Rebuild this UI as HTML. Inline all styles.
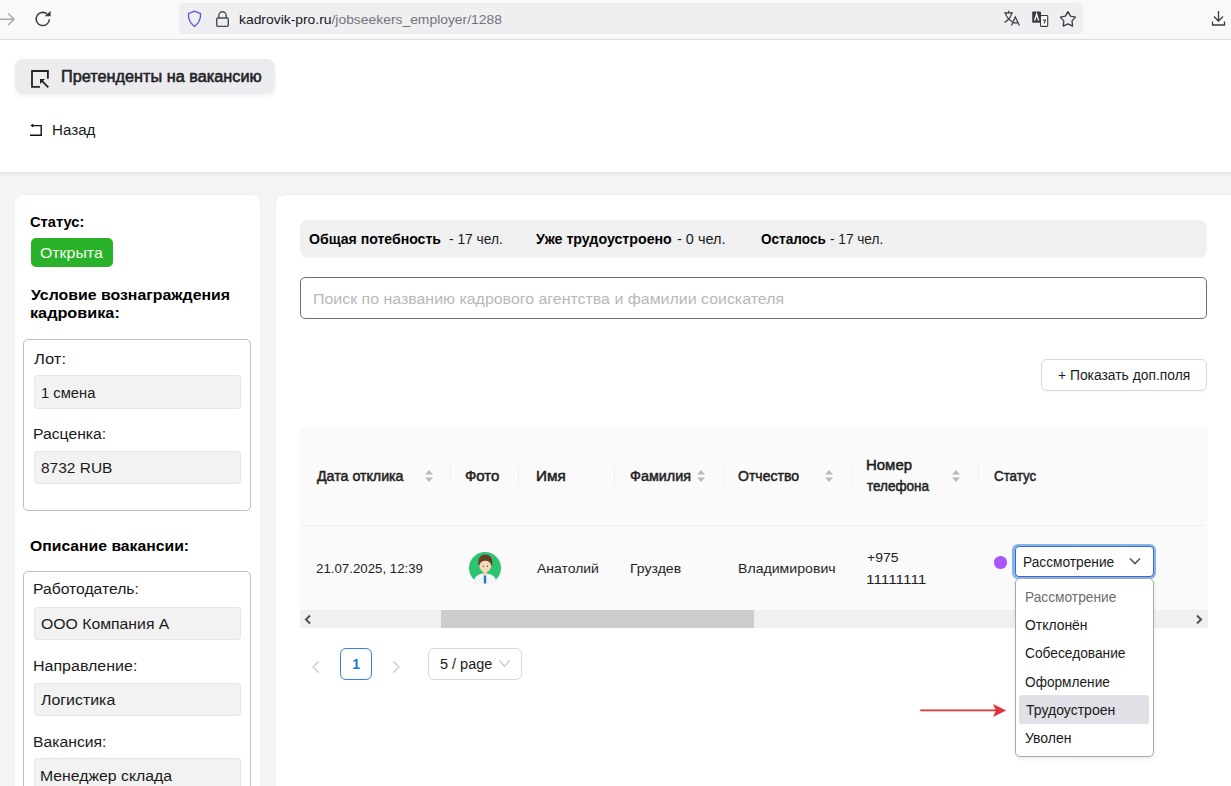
<!DOCTYPE html>
<html><head><meta charset="utf-8"><style>
html,body{margin:0;padding:0;}
body{width:1231px;height:786px;overflow:hidden;position:relative;font-family:"Liberation Sans", sans-serif;background:#fff;}
</style></head><body>
<div style="position:absolute;left:0px;top:0px;width:1231px;height:39px;background:#f9f9fb;"></div>
<div style="position:absolute;left:0px;top:39px;width:1231px;height:1px;background:#e2e2e7;"></div>
<svg style="position:absolute;left:0;top:10px" width="16" height="20" viewBox="0 0 16 20"><path d="M-2 9.3 H14 M8.2 3.5 L14 9.3 L8.2 15.1" fill="none" stroke="#a9a9ad" stroke-width="1.4"/></svg>
<svg style="position:absolute;left:35px;top:10px" width="18" height="18" viewBox="0 0 18 18"><path d="M14.4 9.2 A6.6 6.6 0 1 1 12.0 3.9" fill="none" stroke="#3a3a40" stroke-width="1.5"/><path d="M9.6 6.2 L15.6 6.2 L15.6 1.0 Z" fill="#3a3a40"/></svg>
<div style="position:absolute;left:179px;top:3px;width:904px;height:31px;background:#efeff2;border-radius:4px;"></div>
<svg style="position:absolute;left:186px;top:10px" width="17" height="18" viewBox="0 0 17 18"><path d="M8.5 1.2 L14.6 3.6 C14.8 9 12.6 13.6 8.5 16.6 C4.4 13.6 2.2 9 2.4 3.6 Z" fill="none" stroke="#5b5bd6" stroke-width="1.3" stroke-linejoin="round"/></svg>
<svg style="position:absolute;left:215px;top:10px" width="15" height="18" viewBox="0 0 15 18"><path d="M3.8 8 V5.5 A3.7 3.7 0 0 1 11.2 5.5 V8" fill="none" stroke="#4a4a50" stroke-width="1.4"/><rect x="1.7" y="8" width="11.6" height="8.4" rx="1.5" fill="none" stroke="#4a4a50" stroke-width="1.4"/></svg>
<div style="position:absolute;left:239.30px;top:13.49px;font-size:13.6px;line-height:13.6px;font-weight:400;color:#15141a;white-space:nowrap;transform:scaleX(1.0204);transform-origin:0 0;">kadrovik-pro.ru<span style="color:#737379">/jobseekers_employer/1288</span></div>
<svg style="position:absolute;left:1003px;top:10px" width="19" height="18" viewBox="0 0 19 18"><path d="M1.2 2.8 H10 M5.6 0.8 V2.8 M2.6 3.4 C3.6 7.4 6 10 9.4 11.6 M8.6 3.4 C7.9 7 5.5 10.2 1.5 12.4" fill="none" stroke="#3a3a40" stroke-width="1.2"/><path d="M8.4 15.6 L12.3 7 L16.4 15.6 M9.7 12.9 H15.1" fill="none" stroke="#3a3a40" stroke-width="1.2"/></svg>
<svg style="position:absolute;left:1031px;top:10px" width="19" height="18" viewBox="0 0 19 18"><rect x="9.5" y="5.5" width="7.2" height="10.9" rx="0.8" fill="#fff" stroke="#3a3a40" stroke-width="1.1"/><rect x="1.2" y="1.4" width="8.8" height="11.3" rx="0.8" fill="#3a3a40"/><path d="M3.6 10.5 L5.6 4 L7.6 10.5" fill="none" stroke="#fff" stroke-width="1.3"/><path d="M11.5 10 H14.5 L13 13.5" fill="none" stroke="#3a3a40" stroke-width="1.1"/></svg>
<svg style="position:absolute;left:1059px;top:10px" width="18" height="18" viewBox="0 0 18 18"><path d="M8.90 1.60 L11.43 6.12 L16.51 7.13 L12.99 10.93 L13.60 16.07 L8.90 13.90 L4.20 16.07 L4.81 10.93 L1.29 7.13 L6.37 6.12 Z" fill="none" stroke="#3a3a40" stroke-width="1.3" stroke-linejoin="round"/></svg>
<svg style="position:absolute;left:1211px;top:10px" width="16" height="17" viewBox="0 0 16 17"><path d="M7.5 1 V11 M3 6.5 L7.5 11 L12 6.5 M1.5 11.5 V15 H13.5 V11.5" fill="none" stroke="#3a3a40" stroke-width="1.3"/></svg>
<div style="position:absolute;left:0px;top:40px;width:1231px;height:746px;background:#f3f4f6;"></div>
<div style="position:absolute;left:0px;top:40px;width:1231px;height:132px;background:#fff;box-shadow:0 1px 4px rgba(0,0,0,0.10);"></div>
<div style="position:absolute;left:15px;top:59px;width:260px;height:35px;background:#ececee;border-radius:8px;box-shadow:0 2px 5px rgba(0,0,0,0.06);"></div>
<svg style="position:absolute;left:30px;top:69px" width="20" height="20" viewBox="0 0 20 20"><path d="M9.9 17.9 H2 V2 H17.9 V9.7" fill="none" stroke="#222" stroke-width="1.8"/><path d="M11.6 11.6 L18.3 18.3" stroke="#222" stroke-width="1.8"/><path d="M10 10 L15 10 L10 15 Z" fill="#222"/></svg>
<div style="position:absolute;left:60.80px;top:68.59px;font-size:15.6px;line-height:15.6px;font-weight:400;color:#1f2329;white-space:nowrap;transform:scaleX(1.0434);transform-origin:0 0;-webkit-text-stroke:0.55px #1f2329;">Претенденты на вакансию</div>
<svg style="position:absolute;left:28px;top:122px" width="16" height="16" viewBox="0 0 16 16"><path d="M4 3.6 H13.2 V13.2 H2" fill="none" stroke="#111" stroke-width="1.4"/><path d="M2.4 3.6 L5.2 1.6 L5.2 5.6 Z" fill="#111"/></svg>
<div style="position:absolute;left:51.69px;top:123.26px;font-size:14.7px;line-height:14.7px;font-weight:400;color:#1a1a1a;white-space:nowrap;transform:scaleX(1.0315);transform-origin:0 0;">Назад</div>
<div style="position:absolute;left:15px;top:195px;width:245px;height:600px;background:#fff;border-radius:9px;box-shadow:0 0 3px rgba(0,0,0,0.03);"></div>
<div style="position:absolute;left:30.41px;top:214.53px;font-size:14.5px;line-height:14.5px;font-weight:700;color:#000;white-space:nowrap;transform:scaleX(1.0123);transform-origin:0 0;">Статус:</div>
<div style="position:absolute;left:31px;top:238px;width:82px;height:29px;background:#2bb22b;border-radius:5px;"></div>
<div style="position:absolute;left:39.79px;top:246.47px;font-size:14.8px;line-height:14.8px;font-weight:400;color:#f4fff0;white-space:nowrap;transform:scaleX(1.0731);transform-origin:0 0;">Открыта</div>
<div style="position:absolute;left:31.05px;top:287.10px;font-size:15px;line-height:15px;font-weight:700;color:#000;white-space:nowrap;transform:scaleX(1.0570);transform-origin:0 0;">Условие вознаграждения</div>
<div style="position:absolute;left:29.99px;top:304.90px;font-size:15px;line-height:15px;font-weight:700;color:#000;white-space:nowrap;transform:scaleX(1.0822);transform-origin:0 0;">кадровика:</div>
<div style="position:absolute;left:23px;top:338.5px;width:228px;height:172px;border:1px solid #bdbdbd;border-radius:5px;box-sizing:border-box;"></div>
<div style="position:absolute;left:33.52px;top:350.93px;font-size:15.2px;line-height:15.2px;font-weight:400;color:#1a1a1a;white-space:nowrap;transform:scaleX(1.0935);transform-origin:0 0;">Лот:</div>
<div style="position:absolute;left:34px;top:375px;width:207px;height:33.5px;background:#f2f2f2;border:1px solid #e6e6e6;border-radius:3px;box-sizing:border-box;"></div>
<div style="position:absolute;left:40.69px;top:384.73px;font-size:15.2px;line-height:15.2px;font-weight:400;color:#1a1a1a;white-space:nowrap;transform:scaleX(0.9718);transform-origin:0 0;">1 смена</div>
<div style="position:absolute;left:32.94px;top:426.33px;font-size:15.2px;line-height:15.2px;font-weight:400;color:#1a1a1a;white-space:nowrap;transform:scaleX(1.0356);transform-origin:0 0;">Расценка:</div>
<div style="position:absolute;left:34px;top:451px;width:207px;height:32.5px;background:#f2f2f2;border:1px solid #e6e6e6;border-radius:3px;box-sizing:border-box;"></div>
<div style="position:absolute;left:41.18px;top:459.73px;font-size:15.2px;line-height:15.2px;font-weight:400;color:#1a1a1a;white-space:nowrap;transform:scaleX(1.0189);transform-origin:0 0;">8732 RUB</div>
<div style="position:absolute;left:30.27px;top:537.50px;font-size:15px;line-height:15px;font-weight:700;color:#000;white-space:nowrap;transform:scaleX(1.0488);transform-origin:0 0;">Описание вакансии:</div>
<div style="position:absolute;left:23px;top:570.5px;width:228px;height:240px;border:1px solid #bdbdbd;border-radius:5px;box-sizing:border-box;"></div>
<div style="position:absolute;left:32.84px;top:581.33px;font-size:15.2px;line-height:15.2px;font-weight:400;color:#1a1a1a;white-space:nowrap;transform:scaleX(1.0328);transform-origin:0 0;">Работодатель:</div>
<div style="position:absolute;left:34px;top:607px;width:207px;height:33px;background:#f2f2f2;border:1px solid #e6e6e6;border-radius:3px;box-sizing:border-box;"></div>
<div style="position:absolute;left:40.59px;top:616.43px;font-size:15.2px;line-height:15.2px;font-weight:400;color:#1a1a1a;white-space:nowrap;transform:scaleX(1.0391);transform-origin:0 0;">ООО Компания А</div>
<div style="position:absolute;left:32.72px;top:657.83px;font-size:15.2px;line-height:15.2px;font-weight:400;color:#1a1a1a;white-space:nowrap;transform:scaleX(1.0528);transform-origin:0 0;">Направление:</div>
<div style="position:absolute;left:34px;top:683px;width:207px;height:33px;background:#f2f2f2;border:1px solid #e6e6e6;border-radius:3px;box-sizing:border-box;"></div>
<div style="position:absolute;left:41.22px;top:692.33px;font-size:15.2px;line-height:15.2px;font-weight:400;color:#1a1a1a;white-space:nowrap;transform:scaleX(1.0478);transform-origin:0 0;">Логистика</div>
<div style="position:absolute;left:32.74px;top:733.73px;font-size:15.2px;line-height:15.2px;font-weight:400;color:#1a1a1a;white-space:nowrap;transform:scaleX(1.0351);transform-origin:0 0;">Вакансия:</div>
<div style="position:absolute;left:34px;top:758px;width:207px;height:33px;background:#f2f2f2;border:1px solid #e6e6e6;border-radius:3px;box-sizing:border-box;"></div>
<div style="position:absolute;left:40.04px;top:767.93px;font-size:15.2px;line-height:15.2px;font-weight:400;color:#1a1a1a;white-space:nowrap;transform:scaleX(1.0401);transform-origin:0 0;">Менеджер склада</div>
<div style="position:absolute;left:276px;top:195px;width:970px;height:600px;background:#fff;border-radius:9px;box-shadow:0 0 3px rgba(0,0,0,0.03);"></div>
<div style="position:absolute;left:300px;top:220px;width:907px;height:36.5px;background:#f0f0f0;border-radius:8px;box-shadow:0 1px 2px rgba(0,0,0,0.04);"></div>
<div style="position:absolute;left:309.24px;top:232.15px;font-size:14px;line-height:14px;font-weight:700;color:#000;white-space:nowrap;transform:scaleX(1.0057);transform-origin:0 0;">Общая потебность</div>
<div style="position:absolute;left:448.95px;top:232.15px;font-size:14px;line-height:14px;font-weight:400;color:#1a1a1a;white-space:nowrap;transform:scaleX(0.9826);transform-origin:0 0;">- 17 чел.</div>
<div style="position:absolute;left:536.00px;top:232.15px;font-size:14px;line-height:14px;font-weight:700;color:#000;white-space:nowrap;transform:scaleX(1.0146);transform-origin:0 0;">Уже трудоустроено</div>
<div style="position:absolute;left:676.82px;top:232.15px;font-size:14px;line-height:14px;font-weight:400;color:#1a1a1a;white-space:nowrap;transform:scaleX(1.0337);transform-origin:0 0;">- 0 чел.</div>
<div style="position:absolute;left:760.96px;top:232.15px;font-size:14px;line-height:14px;font-weight:700;color:#000;white-space:nowrap;transform:scaleX(0.9701);transform-origin:0 0;">Осталось</div>
<div style="position:absolute;left:829.96px;top:232.15px;font-size:14px;line-height:14px;font-weight:400;color:#1a1a1a;white-space:nowrap;transform:scaleX(0.9732);transform-origin:0 0;">- 17 чел.</div>
<div style="position:absolute;left:300px;top:277px;width:907px;height:41.5px;border:1px solid #6e6e6e;border-radius:5px;box-sizing:border-box;"></div>
<div style="position:absolute;left:312.53px;top:290.96px;font-size:15.4px;line-height:15.4px;font-weight:400;color:#b8b8b8;white-space:nowrap;transform:scaleX(1.0347);transform-origin:0 0;">Поиск по названию кадрового агентства и фамилии соискателя</div>
<div style="position:absolute;left:1041px;top:359px;width:165.5px;height:31.5px;border:1px solid #d9d9d9;border-radius:6px;box-sizing:border-box;box-shadow:0 2px 0 rgba(0,0,0,0.02);"></div>
<div style="position:absolute;left:1058.38px;top:368.25px;font-size:14px;line-height:14px;font-weight:400;color:#1a1a1a;white-space:nowrap;transform:scaleX(0.9890);transform-origin:0 0;">+ Показать доп.поля</div>
<div style="position:absolute;left:300px;top:428px;width:907.5px;height:97px;background:#fafafa;"></div>
<div style="position:absolute;left:300px;top:525px;width:905.5px;height:1px;background:#f0f0f0;"></div>
<div style="position:absolute;left:300px;top:526px;width:907.5px;height:84.5px;background:#fafafa;"></div>
<div style="position:absolute;left:450px;top:466px;width:1px;height:18px;background:#efefef;"></div>
<div style="position:absolute;left:517.5px;top:466px;width:1px;height:18px;background:#efefef;"></div>
<div style="position:absolute;left:614px;top:466px;width:1px;height:18px;background:#efefef;"></div>
<div style="position:absolute;left:722.5px;top:466px;width:1px;height:18px;background:#efefef;"></div>
<div style="position:absolute;left:851px;top:466px;width:1px;height:18px;background:#efefef;"></div>
<div style="position:absolute;left:977.5px;top:466px;width:1px;height:18px;background:#efefef;"></div>
<div style="position:absolute;left:316.63px;top:469.52px;font-size:13.8px;line-height:13.8px;font-weight:400;color:#1f1f1f;white-space:nowrap;transform:scaleX(1.0292);transform-origin:0 0;-webkit-text-stroke:0.5px #1f1f1f;">Дата отклика</div>
<div style="position:absolute;left:465.48px;top:469.52px;font-size:13.8px;line-height:13.8px;font-weight:400;color:#1f1f1f;white-space:nowrap;transform:scaleX(1.0837);transform-origin:0 0;-webkit-text-stroke:0.5px #1f1f1f;">Фото</div>
<div style="position:absolute;left:535.58px;top:469.52px;font-size:13.8px;line-height:13.8px;font-weight:400;color:#1f1f1f;white-space:nowrap;transform:scaleX(1.1071);transform-origin:0 0;-webkit-text-stroke:0.5px #1f1f1f;">Имя</div>
<div style="position:absolute;left:629.81px;top:469.52px;font-size:13.8px;line-height:13.8px;font-weight:400;color:#1f1f1f;white-space:nowrap;transform:scaleX(1.0400);transform-origin:0 0;-webkit-text-stroke:0.5px #1f1f1f;">Фамилия</div>
<div style="position:absolute;left:738.47px;top:469.52px;font-size:13.8px;line-height:13.8px;font-weight:400;color:#1f1f1f;white-space:nowrap;transform:scaleX(1.0172);transform-origin:0 0;-webkit-text-stroke:0.5px #1f1f1f;">Отчество</div>
<div style="position:absolute;left:865.90px;top:459.22px;font-size:13.8px;line-height:13.8px;font-weight:400;color:#1f1f1f;white-space:nowrap;transform:scaleX(1.0839);transform-origin:0 0;-webkit-text-stroke:0.5px #1f1f1f;">Номер</div>
<div style="position:absolute;left:866.80px;top:480.32px;font-size:13.8px;line-height:13.8px;font-weight:400;color:#1f1f1f;white-space:nowrap;transform:scaleX(0.9767);transform-origin:0 0;-webkit-text-stroke:0.5px #1f1f1f;">телефона</div>
<div style="position:absolute;left:993.63px;top:469.72px;font-size:13.8px;line-height:13.8px;font-weight:400;color:#1f1f1f;white-space:nowrap;transform:scaleX(0.9677);transform-origin:0 0;-webkit-text-stroke:0.5px #1f1f1f;">Статус</div>
<svg style="position:absolute;left:423.5px;top:468.5px" width="10" height="14" viewBox="0 0 10 14"><path d="M5 1 L9 5.5 H1 Z M5 13 L9 8.5 H1 Z" fill="#b8b8b8"/></svg>
<svg style="position:absolute;left:696px;top:468.5px" width="10" height="14" viewBox="0 0 10 14"><path d="M5 1 L9 5.5 H1 Z M5 13 L9 8.5 H1 Z" fill="#b8b8b8"/></svg>
<svg style="position:absolute;left:824px;top:468.5px" width="10" height="14" viewBox="0 0 10 14"><path d="M5 1 L9 5.5 H1 Z M5 13 L9 8.5 H1 Z" fill="#b8b8b8"/></svg>
<svg style="position:absolute;left:951px;top:468.5px" width="10" height="14" viewBox="0 0 10 14"><path d="M5 1 L9 5.5 H1 Z M5 13 L9 8.5 H1 Z" fill="#b8b8b8"/></svg>
<div style="position:absolute;left:315.94px;top:561.99px;font-size:13.6px;line-height:13.6px;font-weight:400;color:#1f1f1f;white-space:nowrap;transform:scaleX(0.9758);transform-origin:0 0;">21.07.2025, 12:39</div>
<svg style="position:absolute;left:468px;top:551px" width="34" height="34" viewBox="0 0 34 34">
<defs><clipPath id="cc"><circle cx="17" cy="17" r="16"/></clipPath></defs>
<circle cx="17" cy="17" r="16" fill="#2cc470"/>
<path d="M5 34 C5.5 25.5 10 22.5 17 22.5 C24 22.5 28.5 25.5 29 34 Z" fill="#f3f6f8"/>
<path d="M15.8 24.5 H18.2 L18.2 32.5 H15.8 Z" fill="#1f78c8"/>
<path d="M10.4 14.5 C9.6 6.5 12.8 3.4 17.3 3.4 C21.8 3.4 25 6.5 24.2 14.5 Z" fill="#6a3d22"/>
<rect x="14.8" y="18.5" width="4.4" height="5" fill="#f2c9a5"/>
<ellipse cx="17.3" cy="15.2" rx="5.9" ry="5.6" fill="#f7d8b8"/>
<path d="M11.2 12 C12.6 9.6 16 9 19.8 9.2 C21.8 9.3 23 10.2 23.6 12 L24 8.5 C22 4.8 12.6 4.8 10.8 8.5 Z" fill="#6a3d22"/>
<circle cx="15.2" cy="15.2" r="0.6" fill="#5a3a2a"/><circle cx="19.4" cy="15.2" r="0.6" fill="#5a3a2a"/>
</svg>
<div style="position:absolute;left:536.90px;top:562.09px;font-size:13.6px;line-height:13.6px;font-weight:400;color:#1f1f1f;white-space:nowrap;transform:scaleX(1.0259);transform-origin:0 0;">Анатолий</div>
<div style="position:absolute;left:629.78px;top:562.29px;font-size:13.6px;line-height:13.6px;font-weight:400;color:#1f1f1f;white-space:nowrap;transform:scaleX(1.0334);transform-origin:0 0;">Груздев</div>
<div style="position:absolute;left:737.87px;top:562.29px;font-size:13.6px;line-height:13.6px;font-weight:400;color:#1f1f1f;white-space:nowrap;transform:scaleX(1.0383);transform-origin:0 0;">Владимирович</div>
<div style="position:absolute;left:867.37px;top:550.99px;font-size:13.6px;line-height:13.6px;font-weight:400;color:#1f1f1f;white-space:nowrap;transform:scaleX(1.0291);transform-origin:0 0;">+975</div>
<div style="position:absolute;left:866.35px;top:572.69px;font-size:13.6px;line-height:13.6px;font-weight:400;color:#1f1f1f;white-space:nowrap;transform:scaleX(1.1290);transform-origin:0 0;">11111111</div>
<div style="position:absolute;left:994px;top:556px;width:12.5px;height:12.5px;background:#a855f7;border-radius:50%;"></div>
<div style="position:absolute;left:1011.5px;top:543.5px;width:144.5px;height:35.5px;border-radius:6px;background:#86b4ee;"></div>
<div style="position:absolute;left:1014.5px;top:546.3px;width:139px;height:31px;border:1px solid #3a6ad0;border-radius:4px;box-sizing:border-box;background:#fff;"></div>
<div style="position:absolute;left:1022.80px;top:554.75px;font-size:14px;line-height:14px;font-weight:400;color:#1a1a1a;white-space:nowrap;transform:scaleX(0.9801);transform-origin:0 0;">Рассмотрение</div>
<svg style="position:absolute;left:1128px;top:556px" width="14" height="10" viewBox="0 0 14 10"><path d="M2 2.5 L7 7.5 L12 2.5" fill="none" stroke="#555" stroke-width="1.6"/></svg>
<div style="position:absolute;left:300px;top:610px;width:908px;height:18px;background:#f0f0f0;"></div>
<div style="position:absolute;left:441px;top:610px;width:313px;height:18px;background:#cdcdcd;"></div>
<svg style="position:absolute;left:303px;top:614px" width="10" height="11" viewBox="0 0 10 11"><path d="M7 1.5 L3 5.5 L7 9.5" fill="none" stroke="#505050" stroke-width="2"/></svg>
<svg style="position:absolute;left:1194px;top:614px" width="10" height="11" viewBox="0 0 10 11"><path d="M3 1.5 L7 5.5 L3 9.5" fill="none" stroke="#505050" stroke-width="2"/></svg>
<svg style="position:absolute;left:310px;top:660px" width="12" height="14" viewBox="0 0 12 14"><path d="M8.5 1.5 L3 7 L8.5 12.5" fill="none" stroke="#c8c8c8" stroke-width="1.3"/></svg>
<div style="position:absolute;left:340px;top:648px;width:32px;height:32px;border:1px solid #3b82e0;border-radius:6px;box-sizing:border-box;"></div>
<div style="position:absolute;left:352.20px;top:657.45px;font-size:14px;line-height:14px;font-weight:700;color:#1f74dc;white-space:nowrap;">1</div>
<svg style="position:absolute;left:390px;top:660px" width="12" height="14" viewBox="0 0 12 14"><path d="M3.5 1.5 L9 7 L3.5 12.5" fill="none" stroke="#c8c8c8" stroke-width="1.3"/></svg>
<div style="position:absolute;left:428px;top:648px;width:94px;height:32px;border:1px solid #d9d9d9;border-radius:6px;box-sizing:border-box;background:#fff;"></div>
<div style="position:absolute;left:439.82px;top:657.45px;font-size:14px;line-height:14px;font-weight:400;color:#1a1a1a;white-space:nowrap;transform:scaleX(1.0325);transform-origin:0 0;">5 / page</div>
<svg style="position:absolute;left:498px;top:659px" width="13" height="10" viewBox="0 0 13 10"><path d="M1.5 1.5 L6.5 7.5 L11.5 1.5" fill="none" stroke="#c8c8c8" stroke-width="1.2"/></svg>
<div style="position:absolute;left:1014.5px;top:577.5px;width:139px;height:179.5px;background:#fff;border:1px solid #a8a8a8;border-radius:5px;box-sizing:border-box;box-shadow:0 2px 4px rgba(0,0,0,0.08);"></div>
<div style="position:absolute;left:1019px;top:695px;width:130px;height:28.5px;background:#e0e0e6;border-radius:3px;"></div>
<div style="position:absolute;left:1024.70px;top:590.25px;font-size:14px;line-height:14px;font-weight:400;color:#6d6d6d;white-space:nowrap;transform:scaleX(0.9812);transform-origin:0 0;">Рассмотрение</div>
<div style="position:absolute;left:1025.17px;top:617.75px;font-size:14px;line-height:14px;font-weight:400;color:#1a1a1a;white-space:nowrap;transform:scaleX(0.9936);transform-origin:0 0;">Отклонён</div>
<div style="position:absolute;left:1025.11px;top:645.65px;font-size:14px;line-height:14px;font-weight:400;color:#1a1a1a;white-space:nowrap;transform:scaleX(0.9814);transform-origin:0 0;">Собеседование</div>
<div style="position:absolute;left:1025.18px;top:675.15px;font-size:14px;line-height:14px;font-weight:400;color:#1a1a1a;white-space:nowrap;transform:scaleX(0.9769);transform-origin:0 0;">Оформление</div>
<div style="position:absolute;left:1025.52px;top:702.75px;font-size:14px;line-height:14px;font-weight:400;color:#1a1a1a;white-space:nowrap;transform:scaleX(1.0017);transform-origin:0 0;">Трудоустроен</div>
<div style="position:absolute;left:1025.45px;top:730.65px;font-size:14px;line-height:14px;font-weight:400;color:#1a1a1a;white-space:nowrap;transform:scaleX(0.9980);transform-origin:0 0;">Уволен</div>
<svg style="position:absolute;left:918px;top:702px" width="92" height="17" viewBox="0 0 92 17"><path d="M2.3 8.4 H78" stroke="#e0343a" stroke-width="1.8"/><path d="M75.1 1.9 L88.1 8.4 L75.1 14.9 L77.8 8.4 Z" fill="#e0343a"/></svg>
</body></html>
